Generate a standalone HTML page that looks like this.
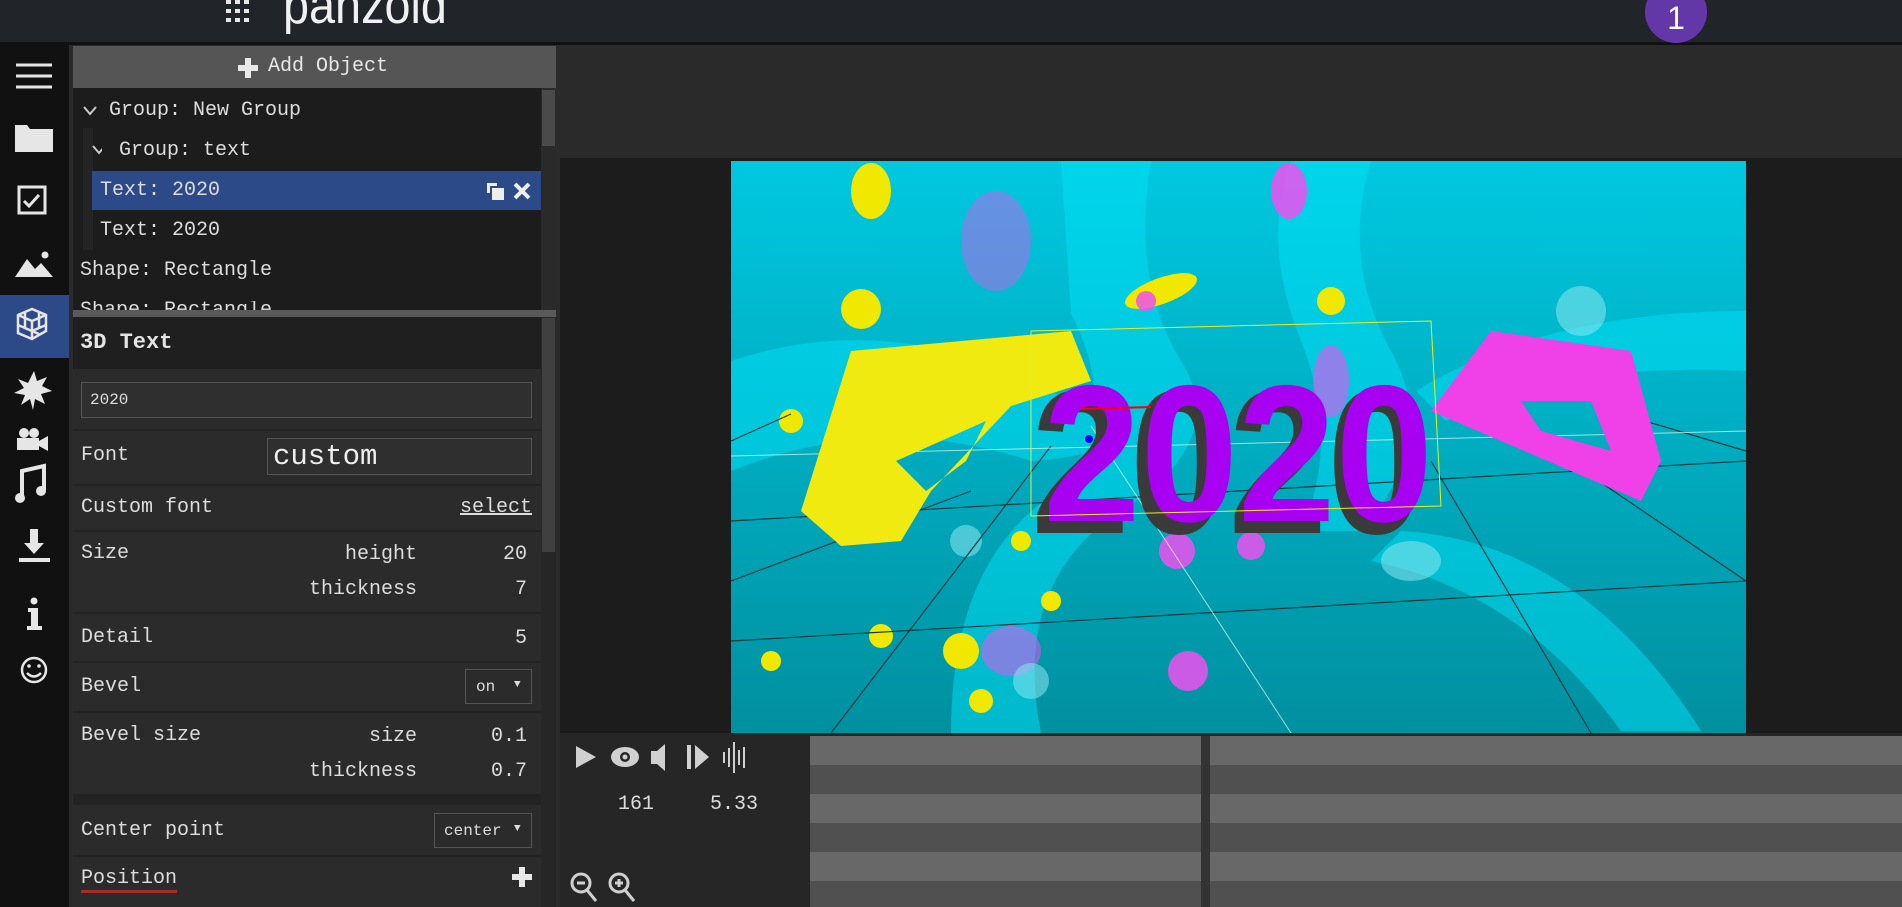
<!DOCTYPE html>
<html><head><meta charset="utf-8"><style>
*{margin:0;padding:0;box-sizing:border-box}
body{width:1902px;height:907px;overflow:hidden;background:#141414;font-family:"Liberation Mono",monospace;color:#ddd;position:relative}
.a{position:absolute}
.t{position:absolute;font-size:20px;color:#ddd;white-space:pre;line-height:1}
.r{text-align:right}
</style></head><body>
<!-- header -->
<div class="a" style="left:0;top:0;width:1902px;height:42px;background:#212428"></div>
<div class="a" style="left:0;top:42px;width:1902px;height:3px;background:#111"></div>
<svg class="a" style="left:224px;top:0" width="30" height="26"><g fill="#e8e8e8">
<rect x="2" y="0" width="5" height="4"/><rect x="11" y="0" width="5" height="4"/><rect x="20" y="0" width="5" height="4"/>
<rect x="2" y="9" width="5" height="4"/><rect x="11" y="9" width="5" height="4"/><rect x="20" y="9" width="5" height="4"/>
<rect x="2" y="18" width="5" height="4"/><rect x="11" y="18" width="5" height="4"/><rect x="20" y="18" width="5" height="4"/></g></svg>
<div class="a" style="left:283px;top:-20px;font-family:'Liberation Sans',sans-serif;font-size:52px;color:#eef0f2;transform:scaleX(0.9);transform-origin:left;line-height:1">panzoid</div>
<div class="a" style="left:1645px;top:-19px;width:62px;height:62px;border-radius:50%;background:#6337a8;color:#fff;font-family:'Liberation Sans',sans-serif;font-size:32px;text-align:center;line-height:62px;padding-top:6px">1</div>

<!-- sidebar -->
<div class="a" style="left:0;top:45px;width:69px;height:862px;background:#111"></div>
<div class="a" style="left:0;top:295px;width:69px;height:63px;background:#2c4a87"></div>
<svg class="a" style="left:0;top:45px" width="69" height="700" fill="#e6e6e6" stroke="#e6e6e6">
<g stroke-width="3"><line x1="16" y1="20" x2="52" y2="20"/><line x1="16" y1="31" x2="52" y2="31"/><line x1="16" y1="42" x2="52" y2="42"/></g>
<path d="M15 80h12l3 4h23v23H15z" stroke="none"/>
<rect x="19" y="142" width="26" height="26" fill="none" stroke-width="3"/><path d="M24 156l5 5 10-11" fill="none" stroke-width="3"/>
<path d="M15 232l12-18 8 10 6-6 12 14z" stroke="none"/><circle cx="45" cy="210" r="3.5" stroke="none"/>
<g fill="none" stroke-width="2.5"><path d="M18 270l14-6 14 6v16l-14 8-14-6z"/><path d="M18 270l14 6 14-6M32 276v18"/><path d="M25 267v16l14 6M39 267v16M18 280l14 6 14-6"/></g>
<path d="M34 326l3 10 10-4-5 9 10 5-11 3 4 10-10-5-2 11-3-11-9 6 4-10-11-2 10-5-6-9 10 4z" stroke="none"/>
<circle cx="24" cy="388" r="5" stroke="none"/><circle cx="34" cy="388" r="5" stroke="none"/><rect x="17" y="393" width="22" height="12" stroke="none"/><path d="M39 396l9-5v15l-9-5z" stroke="none"/>
<path d="M22 450v-24l22-5v24" fill="none" stroke-width="4"/><circle cx="20" cy="453" r="5" stroke="none"/><circle cx="41" cy="446" r="5" stroke="none"/>
<path d="M30 484h8v14h6l-10 11-10-11h6z" stroke="none"/><rect x="19" y="513" width="31" height="4" stroke="none"/>
<circle cx="34" cy="556" r="3.5" stroke="none"/><path d="M28 563h10v18h4v4H27v-4h4v-14h-3z" stroke="none"/>
<circle cx="34" cy="625" r="12" fill="none" stroke-width="2.5"/><circle cx="29" cy="621" r="1.8" stroke="none"/><circle cx="39" cy="621" r="1.8" stroke="none"/><path d="M27 628q7 7 14 0" fill="none" stroke-width="2.5"/>
</svg>

<!-- object panel -->
<div class="a" style="left:69px;top:45px;width:491px;height:862px;background:#2b2b2b"></div>
<div class="a" style="left:73px;top:46px;width:483px;height:42px;background:#555"></div>
<svg class="a" style="left:238px;top:58px" width="20" height="20"><path d="M7 0h6v7h7v6h-7v7H7v-7H0V7h7z" fill="#e8e8e8"/></svg>
<div class="t" style="left:268px;top:57px;font-size:20px;color:#e8e8e8">Add Object</div>
<div class="a" style="left:73px;top:88px;width:468px;height:222px;background:#1c1c1c"></div>
<div class="a" style="left:83px;top:128px;width:10px;height:122px;background:#242424"></div>
<div class="a" style="left:541px;top:88px;width:15px;height:222px;background:#2a2a2a"></div>
<div class="a" style="left:542px;top:90px;width:13px;height:56px;background:#4a4a4a"></div>
<svg class="a" style="left:82px;top:103px" width="20" height="60" fill="none" stroke="#ccc" stroke-width="2"><path d="M2 4l6 7 6-7"/><path d="M12 44l6 7 6-7" transform="translate(-1,-1)"/></svg>
<div class="t" style="left:109px;top:101px">Group: New Group</div>
<div class="t" style="left:119px;top:141px">Group: text</div>
<div class="a" style="left:92px;top:171px;width:449px;height:39px;background:#2c4a87"></div>
<div class="t" style="left:100px;top:181px">Text: 2020</div>
<svg class="a" style="left:485px;top:180px" width="52" height="22"><path d="M2 3h10v3H5v7H2z M7 8h12v12H7z" fill="#eee"/><path d="M30 4l14 14M44 4L30 18" stroke="#eee" stroke-width="4"/></svg>
<div class="t" style="left:100px;top:221px">Text: 2020</div>
<div class="t" style="left:80px;top:261px">Shape: Rectangle</div>
<div class="t" style="left:80px;top:301px;height:9px;overflow:hidden">Shape: Rectangle</div>
<div class="a" style="left:73px;top:310px;width:483px;height:7px;background:#5a5a5a"></div>

<!-- properties -->
<div class="a" style="left:73px;top:317px;width:468px;height:52px;background:#1f1f1f"></div>
<div class="t" style="left:80px;top:332px;font-size:22px;font-weight:bold;color:#e4e4e4">3D Text</div>
<div class="a" style="left:541px;top:317px;width:15px;height:590px;background:#262626"></div>
<div class="a" style="left:542px;top:318px;width:13px;height:234px;background:#404040"></div>
<div class="a" style="left:81px;top:382px;width:451px;height:36px;border:1px solid #555;background:#2f2f2f"></div>
<div class="t" style="left:90px;top:392px;font-size:16px">2020</div>
<div class="a" style="left:73px;top:429px;width:468px;height:2px;background:#242424"></div>
<div class="t" style="left:81px;top:446px">Font</div>
<div class="a" style="left:267px;top:438px;width:265px;height:37px;border:1px solid #555;background:#2f2f2f"></div>
<div class="t" style="left:273px;top:442px;font-size:29px;color:#eee">custom</div>
<div class="a" style="left:73px;top:484px;width:468px;height:2px;background:#242424"></div>
<div class="t" style="left:81px;top:498px">Custom font</div>
<div class="t" style="left:460px;top:498px;text-decoration:underline">select</div>
<div class="a" style="left:73px;top:530px;width:468px;height:2px;background:#242424"></div>
<div class="t" style="left:81px;top:544px">Size</div>
<div class="t r" style="left:280px;top:545px;width:137px">height</div>
<div class="t r" style="left:450px;top:545px;width:77px">20</div>
<div class="t r" style="left:270px;top:580px;width:147px">thickness</div>
<div class="t r" style="left:450px;top:580px;width:77px">7</div>
<div class="a" style="left:73px;top:612px;width:468px;height:2px;background:#242424"></div>
<div class="t" style="left:81px;top:628px">Detail</div>
<div class="t r" style="left:450px;top:629px;width:77px">5</div>
<div class="a" style="left:73px;top:661px;width:468px;height:2px;background:#242424"></div>
<div class="t" style="left:81px;top:677px">Bevel</div>
<div class="a" style="left:465px;top:669px;width:67px;height:35px;border:1px solid #555;background:#2b2b2b"></div>
<div class="t" style="left:476px;top:679px;font-size:16px">on</div>
<div class="t" style="left:514px;top:680px;font-size:11px">▼</div>
<div class="a" style="left:73px;top:711px;width:468px;height:2px;background:#242424"></div>
<div class="t" style="left:81px;top:726px">Bevel size</div>
<div class="t r" style="left:280px;top:727px;width:137px">size</div>
<div class="t r" style="left:450px;top:727px;width:77px">0.1</div>
<div class="t r" style="left:270px;top:762px;width:147px">thickness</div>
<div class="t r" style="left:450px;top:762px;width:77px">0.7</div>
<div class="a" style="left:73px;top:794px;width:468px;height:11px;background:#232323"></div>
<div class="t" style="left:81px;top:821px">Center point</div>
<div class="a" style="left:434px;top:813px;width:98px;height:35px;border:1px solid #555;background:#2b2b2b"></div>
<div class="t" style="left:444px;top:823px;font-size:16px">center</div>
<div class="t" style="left:514px;top:824px;font-size:11px">▼</div>
<div class="a" style="left:73px;top:855px;width:468px;height:2px;background:#242424"></div>
<div class="t" style="left:81px;top:869px">Position</div>
<div class="a" style="left:81px;top:890px;width:96px;height:3px;background:#a82a2a"></div>
<svg class="a" style="left:512px;top:867px" width="20" height="20"><path d="M7 0h6v7h7v6h-7v7H7v-7H0V7h7z" fill="#e8e8e8"/></svg>

<!-- main area -->
<div class="a" style="left:560px;top:45px;width:1342px;height:688px;background:#1c1c1c"></div>
<div class="a" style="left:560px;top:45px;width:1342px;height:113px;background:#2a2a2a"></div>
<svg class="a" style="left:731px;top:161px" width="1015" height="572" viewBox="0 0 1015 572">
<defs><linearGradient id="bg" x1="0" y1="0" x2="0" y2="1"><stop offset="0" stop-color="#00c8e0"/><stop offset="1" stop-color="#0090a0"/></linearGradient></defs>
<rect width="1015" height="572" fill="url(#bg)"/>
<g fill="#00e2f8" opacity=".5">
<path d="M330 0h90q-20 120 30 200t-60 150 -80 222h-90q0-160 90-230t30-190z"/>
<path d="M560 0h80q-30 100 20 190t-30 180h-60q40-90 0-190t-10-180z"/>
<path d="M0 200q150-50 300 20t0 80q-150-50-300 10z"/>
<path d="M1015 150q-200 0-330 80l30 30q120-60 300-50z"/>
<path d="M640 400q150 30 250 170h80q-120-190-300-200z"/>
</g>
<g fill="#f0e800">
<ellipse cx="140" cy="30" rx="20" ry="28"/><circle cx="130" cy="148" r="20"/><circle cx="600" cy="140" r="14"/><ellipse cx="430" cy="130" rx="38" ry="13" transform="rotate(-20 430 130)"/>
<circle cx="230" cy="490" r="18"/><circle cx="40" cy="500" r="10"/><circle cx="290" cy="380" r="10"/><circle cx="250" cy="540" r="12"/><circle cx="150" cy="475" r="12"/><circle cx="60" cy="260" r="12"/><circle cx="320" cy="440" r="10"/>
</g>
<g fill="#f050f0" opacity=".85">
<ellipse cx="265" cy="80" rx="35" ry="50" opacity=".5"/><ellipse cx="558" cy="30" rx="18" ry="28"/><circle cx="415" cy="140" r="10"/><circle cx="446" cy="390" r="18"/><circle cx="457" cy="510" r="20"/><circle cx="520" cy="385" r="14"/><ellipse cx="280" cy="490" rx="30" ry="25" opacity=".6"/><ellipse cx="600" cy="220" rx="18" ry="36" opacity=".7"/>
</g>
<g fill="#8ae8f0" opacity=".55"><circle cx="850" cy="150" r="25"/><ellipse cx="680" cy="400" rx="30" ry="20"/><circle cx="300" cy="520" r="18"/><circle cx="235" cy="380" r="16"/></g>
<g stroke="#1a3a40" stroke-width="1.2" fill="none"><line x1="0" y1="280" x2="60" y2="253"/><line x1="0" y1="360" x2="1015" y2="300"/><line x1="0" y1="480" x2="1015" y2="420"/><line x1="320" y1="285" x2="100" y2="572"/><line x1="240" y1="330" x2="0" y2="420"/><line x1="750" y1="240" x2="1015" y2="420"/><line x1="880" y1="250" x2="1015" y2="290"/><line x1="700" y1="300" x2="860" y2="572"/></g>
<line x1="0" y1="295" x2="1015" y2="270" stroke="#dfe" stroke-width="1" opacity=".7"/>
<line x1="360" y1="265" x2="560" y2="572" stroke="#dfe" stroke-width="1" opacity=".7"/>
<path d="M120 190L340 170 360 220 280 245 200 330 170 380 110 385 70 350z M165 300 L255 260 235 300 195 330z" fill="#f0ea10" fill-rule="evenodd"/>
<path d="M760 170L900 190 930 300 910 340 770 280 700 250z M790 240 L860 240 880 290 810 270z" fill="#f040e8" fill-rule="evenodd"/>
<text x="300" y="372" font-family="Liberation Sans,sans-serif" font-weight="bold" font-size="205" fill="#3a3a3a" textLength="395" lengthAdjust="spacingAndGlyphs">2020</text>
<text x="312" y="360" font-family="Liberation Sans,sans-serif" font-weight="bold" font-size="195" fill="#a800f0" textLength="390" lengthAdjust="spacingAndGlyphs">2020</text>
<path d="M300 170L700 160 710 345 300 355z" fill="none" stroke="#e8f020" stroke-width="1"/>
<line x1="350" y1="248" x2="420" y2="246" stroke="#f00" stroke-width="2"/><circle cx="358" cy="278" r="4" fill="#00f"/>
</svg>

<!-- timeline -->
<div class="a" style="left:560px;top:733px;width:1342px;height:174px;background:#262626"></div>
<div class="a" style="left:810px;top:736px;width:1092px;height:171px;background:repeating-linear-gradient(#686868 0 29px,#505050 29px 58px)"></div>
<div class="a" style="left:1201px;top:736px;width:9px;height:171px;background:#333"></div>
<svg class="a" style="left:570px;top:740px" width="200" height="40" fill="#d0d0d0">
<path d="M6 6l20 11-20 11z"/>
<ellipse cx="55" cy="17" rx="14" ry="10"/><circle cx="55" cy="17" r="5" fill="#262626"/><circle cx="55" cy="17" r="2.5"/>
<path d="M85 11h6l8-7v27l-8-7h-6z" transform="translate(-4,0)"/>
<rect x="117" y="5" width="4" height="24"/><path d="M125 5l14 12-14 12z"/>
<g stroke="#d0d0d0" stroke-width="2"><line x1="154" y1="12" x2="154" y2="23"/><line x1="159" y1="8" x2="159" y2="27"/><line x1="164" y1="2" x2="164" y2="33"/><line x1="169" y1="10" x2="169" y2="25"/><line x1="174" y1="7" x2="174" y2="28"/></g>
</svg>
<div class="t" style="left:618px;top:795px;font-size:20px">161</div>
<div class="t" style="left:710px;top:795px;font-size:20px">5.33</div>
<svg class="a" style="left:568px;top:870px" width="80" height="37" fill="none" stroke="#d0d0d0" stroke-width="3">
<circle cx="13" cy="13" r="9"/><line x1="19" y1="20" x2="28" y2="31"/><line x1="9" y1="13" x2="17" y2="13"/>
<circle cx="51" cy="13" r="9"/><line x1="57" y1="20" x2="66" y2="31"/><line x1="47" y1="13" x2="55" y2="13"/><line x1="51" y1="9" x2="51" y2="17"/>
</svg>
</body></html>
